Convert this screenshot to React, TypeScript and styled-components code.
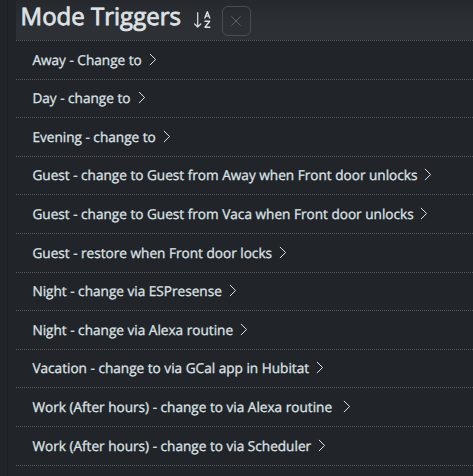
import React from "react";
import styled, { createGlobalStyle } from "styled-components";

const GlobalStyle = createGlobalStyle`
  * { box-sizing: border-box; }
  body {
    margin: 0;
    background: #212529;
    color: #dee2e6;
    font-family: "Open Sans", "Noto Sans", sans-serif;
    text-rendering: geometricPrecision;
    overflow: hidden;
  }
`;

const Page = styled.div`
  width: 100%;
  height: 476px;
  padding-left: 7px;
  background: #212529;
  overflow: hidden;
`;

const Panel = styled.main`
  height: 100%;
  padding-left: 8px;
  border-left: 1px solid #1c2024;
`;

const Header = styled.header`
  display: flex;
  height: 40px;
  padding: 6px 0 0 4.6px;
  background: linear-gradient(#25282c 0, #2c2f33 22px, #2d3034 100%);
`;

const Title = styled.h1`
  margin: -6px 0 0;
  width: 173.4px;
  font-size: 24px;
  line-height: 34px;
  font-weight: 400;
  white-space: nowrap;
  -webkit-text-stroke: 0.8px #dee2e6;
`;

const SortIcon = styled.svg`
  width: 18px;
  height: 19px;
  margin-top: 4px;
`;

const ClearButton = styled.button`
  display: flex;
  align-items: center;
  justify-content: center;
  width: 29px;
  height: 30px;
  margin: 0 0 0 10px;
  padding: 0;
  border: 1px solid #4a4e52;
  border-radius: 6px;
  background: transparent;
`;

const List = styled.ul`
  margin: 0;
  padding: 0;
  list-style: none;
`;

const Row = styled.li`
  display: flex;
  align-items: center;
  height: 38.62px;
  padding: 0 0 1.4px 16.4px;
  border-top: 1px dotted #55595d;
  font-size: 13.61px;
  line-height: 21px;
  white-space: nowrap;
  -webkit-text-stroke: 0.3px #dee2e6;
`;

const Label = styled.span<{ $width: number }>`
  width: ${(p) => p.$width}px;
`;

const Chevron = styled.svg`
  width: 8px;
  height: 13px;
  flex: none;
`;

/* Label text and the width reserved before its chevron. */
const triggers: [string, number][] = [
  ["Away - Change to", 116.6],
  ["Day - change to", 105.6],
  ["Evening - change to", 130.6],
  ["Guest - change to Guest from Away when Front door unlocks", 391.6],
  ["Guest - change to Guest from Vaca when Front door unlocks", 388],
  ["Guest - restore when Front door locks", 246.6],
  ["Night - change via ESPresense", 196.6],
  ["Night - change via Alexa routine", 207.6],
  ["Vacation - change to via GCal app in Hubitat", 283.6],
  ["Work (After hours) - change to via Alexa routine", 310.6],
  ["Work (After hours) - change to via Scheduler", 285.6],
];

export default function App() {
  return (
    <>
      <GlobalStyle />
      <Page>
        <Panel>
          <Header>
            <Title>Mode Triggers</Title>
            <SortIcon viewBox="0 0 18 19" fill="none" stroke="#dee2e6" strokeWidth="1.2" strokeLinecap="round" strokeLinejoin="round">
              <path d="M3.7 2.7V17M0.7 14l3 3 3-3" />
              <path strokeWidth="1.4" d="M10.9 8l2.4-6.2 2.4 6.2M11.6 6.1h3.4M11 11.3h4.6L11 17.3h4.8" />
            </SortIcon>
            <ClearButton aria-label="Clear">
              <svg width="10" height="10" viewBox="0 0 10 10" stroke="#606468" strokeWidth="1">
                <path d="M0.5 0.5l9 9M9.5 0.5l-9 9" />
              </svg>
            </ClearButton>
          </Header>
          <List>
            {triggers.map(([text, width]) => (
              <Row key={text}>
                <Label $width={width}>{text}</Label>
                <Chevron viewBox="0 0 8 13" fill="none" stroke="#dee2e6" strokeWidth="1" strokeLinecap="round" strokeLinejoin="round">
                  <path d="M1.2 1.2l5.4 5.3-5.4 5.3" />
                </Chevron>
              </Row>
            ))}
            <Row aria-hidden="true" />
          </List>
        </Panel>
      </Page>
    </>
  );
}
